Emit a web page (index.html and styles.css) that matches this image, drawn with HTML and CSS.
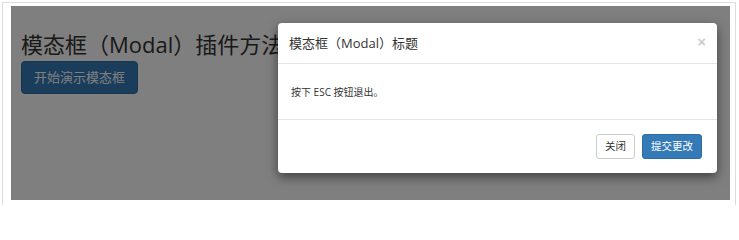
FILE: index.html
```html
<!DOCTYPE html>
<html lang="zh-CN">
<head>
<meta charset="utf-8">
<title>模态框（Modal）插件方法</title>
<link rel="stylesheet" href="styles.css">
</head>
<body>
<div class="frame">
  <div class="viewport">
    <div class="page">
      <h2 class="page-title">模态框（Modal）插件方法</h2>
      <button class="btn btn-primary btn-lg" type="button">开始演示模态框</button>
    </div>
    <div class="backdrop"></div>
    <div class="modal">
      <div class="modal-header">
        <h4 class="modal-title">模态框（Modal）标题</h4>
        <button class="close" type="button" aria-label="Close">&times;</button>
      </div>
      <div class="modal-body">按下 ESC 按钮退出。</div>
      <div class="modal-footer">
        <button class="btn btn-default" type="button">关闭</button>
        <button class="btn btn-primary" type="button">提交更改</button>
      </div>
    </div>
  </div>
</div>
</body>
</html>
```
FILE: styles.css
```css
* { box-sizing: border-box; }
html, body { margin: 0; padding: 0; background: #fff; }
body {
  font-family: "Open Sans", "Noto Sans CJK SC", sans-serif;
  color: #333;
  overflow: hidden;
}
.frame {
  margin: 2px 3px 0 2px;
  height: 203px;
  border: 1px solid #ddd;
  border-bottom: 0;
  padding: 3px 5px 0 8px;
}
.viewport {
  position: relative;
  width: 719px;
  height: 194px;
  overflow: hidden;
  background: #fff;
}
.page {
  padding: 26px 10px 0 10px;
}
.page-title {
  margin: 0 0 5px;
  font-size: 22px;
  line-height: 24px;
  font-weight: 400;
  color: #333;
  white-space: nowrap;
}
.btn {
  display: inline-block;
  font-family: inherit;
  font-size: 10.5px;
  line-height: 15px;
  height: 25px;
  padding: 4px 8px;
  border: 1px solid #ccc;
  border-radius: 3px;
  background: #fff;
  color: #333;
  cursor: pointer;
}
.btn-primary {
  background: #337ab7;
  border-color: #2e6da4;
  color: #fff;
}
.btn-lg {
  font-size: 13px;
  line-height: 19px;
  height: 33px;
  padding: 6px 12px;
  border-radius: 4px;
}
.backdrop {
  position: absolute;
  inset: 0;
  background: rgba(0, 0, 0, 0.5);
}
.modal {
  position: absolute;
  left: 267px;
  top: 17px;
  width: 439px;
  background: #fff;
  border-radius: 4px;
  box-shadow: 0 4px 11px rgba(0, 0, 0, 0.5);
}
.modal-header {
  display: flex;
  align-items: center;
  justify-content: space-between;
  height: 41px;
  padding: 0 11px;
  border-bottom: 1px solid #e5e5e5;
}
.modal-title {
  margin: 0;
  font-size: 13px;
  line-height: 18px;
  font-weight: 400;
  color: #333;
}
.close {
  padding: 0;
  margin: -3px 0 0;
  border: 0;
  background: none;
  font-family: "Liberation Sans", sans-serif;
  font-size: 15px;
  font-weight: 700;
  line-height: 1;
  color: #000;
  opacity: 0.2;
}
.modal-body {
  height: 55px;
  padding: 21px 13px 0;
  font-size: 10px;
  line-height: 14px;
  color: #333;
}
.modal-footer {
  display: flex;
  justify-content: flex-end;
  gap: 7px;
  padding: 14px 15px 14px;
  border-top: 1px solid #e5e5e5;
}
```
